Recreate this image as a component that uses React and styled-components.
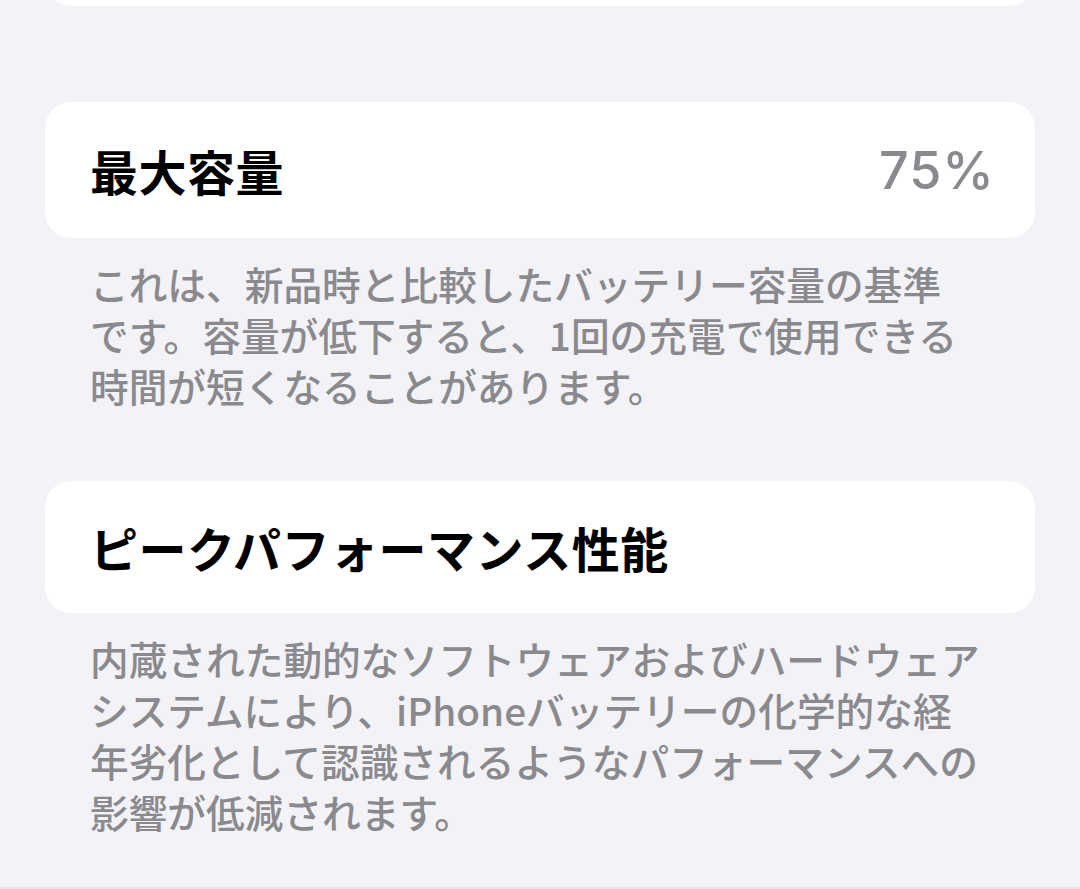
import React from "react";
import styled, { createGlobalStyle } from "styled-components";

const GlobalStyle = createGlobalStyle`
  html, body {
    margin: 0;
    padding: 0;
    background: #f2f2f7;
  }
  body {
    font-family: "Noto Sans CJK JP", "Noto Sans", sans-serif;
    -webkit-font-smoothing: antialiased;
  }
`;

const Screen = styled.div`
  width: 1080px;
  height: 889px;
  overflow: hidden;
  background: #f2f2f7;
  border-bottom: 2px solid #e4e4ea;
  box-sizing: border-box;
`;

/* settings list, scrolled so only the tail of the previous group shows */
const List = styled.div`
  display: flex;
  flex-direction: column;
  padding: 0 45px;
  margin-top: -128px;
`;

const Section = styled.section`
  display: flex;
  flex-direction: column;
  margin-bottom: ${(p) => p.$gap || 0}px;
`;

const Card = styled.div`
  background: #ffffff;
  border-radius: 26px;
  height: ${(p) => p.$h || 134}px;
  display: flex;
  align-items: center;
  justify-content: space-between;
  padding: 0 45px;
  box-sizing: border-box;
`;

const Title = styled.span`
  font-family: "Noto Sans CJK JP", sans-serif;
  font-weight: 700;
  font-size: 48px;
  color: #000000;
  letter-spacing: 0.5px;
`;

const Value = styled.span`
  font-family: Inter, "Liberation Sans", sans-serif;
  font-weight: 500;
  font-size: 52px;
  color: #8a8a8e;
  letter-spacing: 1px;
  margin-right: -5px;
`;

const Footer = styled.p`
  margin: 20px 0 0;
  padding: 0 45px;
  font-family: "Noto Sans CJK JP", sans-serif;
  font-weight: 500;
  font-size: 38.7px;
  line-height: 51px;
  color: #8a8a8e;
  white-space: nowrap;
`;

export default function App() {
  return (
    <>
      <GlobalStyle />
      <Screen>
        <List>
          <Section $gap={96}>
            <Card $h={134} />
          </Section>

          <Section $gap={70}>
            <Card $h={136}>
              <Title>最大容量</Title>
              <Value>75%</Value>
            </Card>
            <Footer>
              これは、新品時と比較したバッテリー容量の基準
              <br />
              です。容量が低下すると、1回の充電で使用できる
              <br />
              時間が短くなることがあります。
            </Footer>
          </Section>

          <Section>
            <Card $h={132}>
              <Title>ピークパフォーマンス性能</Title>
            </Card>
            <Footer>
              内蔵された動的なソフトウェアおよびハードウェア
              <br />
              システムにより、iPhoneバッテリーの化学的な経
              <br />
              年劣化として認識されるようなパフォーマンスへの
              <br />
              影響が低減されます。
            </Footer>
          </Section>
        </List>
      </Screen>
    </>
  );
}
